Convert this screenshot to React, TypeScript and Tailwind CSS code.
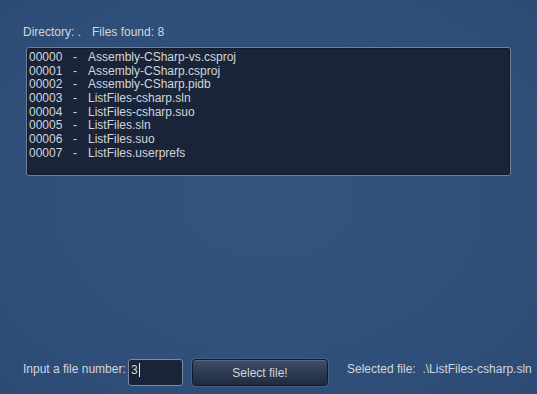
import React from "react";

const files = [
  "Assembly-CSharp-vs.csproj",
  "Assembly-CSharp.csproj",
  "Assembly-CSharp.pidb",
  "ListFiles-csharp.sln",
  "ListFiles-csharp.suo",
  "ListFiles.sln",
  "ListFiles.suo",
  "ListFiles.userprefs",
];

export default function App() {
  return (
    <div
      className="h-screen w-full overflow-hidden flex flex-col pl-[23px] pt-[25px] pb-[8px] text-[12px] text-[#d2d6dc] bg-[radial-gradient(ellipse_at_center,#33547f_0%,#30507b_60%,#2c4a74_100%)]"
      style={{ fontFamily: '"Liberation Sans", Arial, sans-serif' }}
    >
      <div className="flex h-[14px] leading-[14px]">
        <span>Directory: .</span>
        <span className="ml-[11px]">Files found: 8</span>
      </div>

      <div className="mt-[8px] ml-[3px] w-[485px] h-[129px] rounded-[3px] border border-[#6f809b] bg-[#1a2438] shadow-[inset_0_0_0_1px_#131b2b] pt-[3px] pl-[2px]">
        {files.map((f, i) => (
          <div key={f} className="flex leading-[13.7px] h-[13.7px]">
            <span className="w-[44px]">{String(i).padStart(5, "0")}</span>
            <span className="w-[15px]">-</span>
            <span>{f}</span>
          </div>
        ))}
      </div>

      <div className="mt-auto flex items-start h-[27px]">
        <span className="w-[105px] mt-[3px] leading-[14px]">Input a file number:</span>
        <div className="w-[55px] h-[27px] rounded-[3px] border border-[#7a8aa4] bg-[#1a2438] pl-[2px] pt-[3px] leading-[14px] flex">
          <span>3</span>
          <span className="ml-[1px] w-px h-[14px] bg-[#e4e7ec]" />
        </div>
        <button className="ml-[9px] w-[136px] h-[27px] rounded-[4px] border border-[#131a27] bg-gradient-to-b from-[#3d4e68] to-[#1f2b40] shadow-[0_0_0_1px_#4a5f80,inset_0_1px_0_#56677f] text-[12px] text-[#d2d6dc] leading-[14px] pt-[1px]">
          Select file!
        </button>
        <span className="ml-[19px] mt-[3px] leading-[14px] whitespace-pre">Selected file:  .\ListFiles-csharp.sln</span>
      </div>
    </div>
  );
}
